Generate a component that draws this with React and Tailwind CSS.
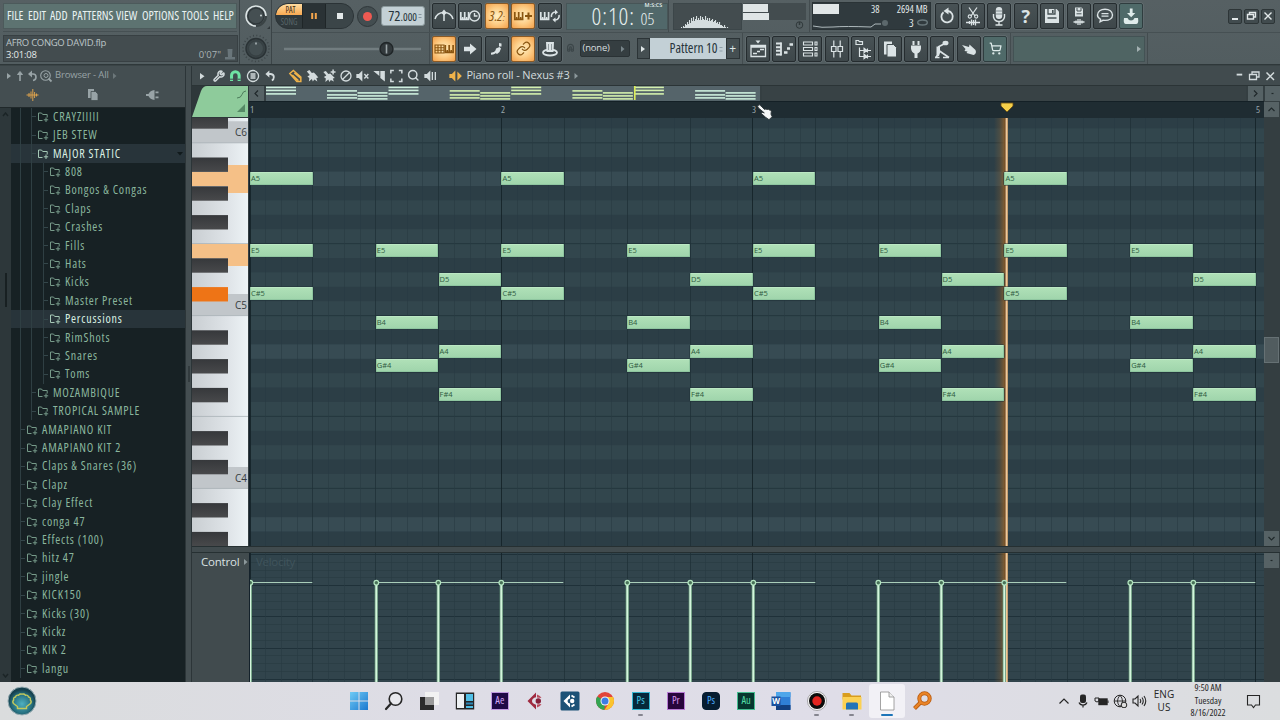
import React from "react";
import { Wrench, Ban, Search, Link, ShoppingCart, Magnet } from "lucide-react";

const ROW = 14.4;
const C5_BOTTOM = 315.6;
const GRID_TOP = 118;
const BEAT = 62.87;
const BLACK = [1, 3, 6, 8, 10];
const SEMI = { C: 0, "C#": 1, D: 2, E: 4, "F#": 6, "G#": 8, A: 9, B: 11 };

const noteY = (name) => {
  const oct = Number(name.slice(-1));
  const k = SEMI[name.slice(0, -1)];
  return C5_BOTTOM - (oct - 5) * 172.8 - (k + 1) * ROW - GRID_TOP;
};

const notes = [];
const starts = [];
for (let bar = 0; bar < 4; bar++) {
  [[0, ["A5", "E5", "C#5"]], [2, ["E5", "B4", "G#4"]], [3, ["D5", "A4", "F#4"]]].forEach(([beat, names]) => {
    const x = 0.8 + (bar * 4 + beat) * BEAT;
    starts.push(x);
    names.forEach((n) => notes.push({ n, x, y: noteY(n) }));
  });
}

const rows = [];
for (let i = 0; i < 32; i++) {
  const y = 142.8 - GRID_TOP - 28.8 + i * ROW;
  const k = (((1 - i) % 12) + 12) % 12;
  rows.push({ y, k });
}

/* ---------- small drawing helpers ---------- */
function Svg({ w = 24, h = 26, className = "", children }) {
  return (
    <svg width={w} height={h} viewBox={`0 0 ${w} ${h}`} className={`block shrink-0 ${className}`} fill="none" stroke="currentColor" strokeWidth="1.4">
      {children}
    </svg>
  );
}
const Keys = ({ x, y = 9 }) => (
  <g>
    <path d={`M${x + 0.8} ${y}V${y + 7.4}H${x + 8.6}V${y}M${x + 4.7} ${y}V${y + 7}`} strokeWidth="1.7" />
    <path d={`M${x + 2.7} ${y + 5}v3M${x + 6.7} ${y + 5}v3`} strokeWidth="1.6" />
  </g>
);

function Btn({ kind = "dark", children }) {
  const look =
    kind === "hot"
      ? "border-[#8a5a26] bg-[radial-gradient(circle,#fff0c4_0%,#fdcd86_50%,#f3a04a_100%)] text-[#8a5510]"
      : kind === "teal"
        ? "border-[#2f3d3f] bg-[#4f6a69] text-[#dfeceb]"
        : "border-[#252c2f] bg-[linear-gradient(#485255,#3e474a)] text-[#dbe3e5]";
  return <div className={`flex h-[26px] w-6 shrink-0 items-center justify-center rounded-[2px] border shadow-[0_0_0_0.5px_#6a7578] ${look}`}>{children}</div>;
}
const VLine = () => <div className="h-full w-px shrink-0 bg-[#434c4f]" />;

/* ---------- header ---------- */
function MenuBlock() {
  return (
    <div className="flex w-[240px] shrink-0 flex-col border-r border-[#3b4447] pl-[3px] pr-[2px]">
      <div className="flex h-8 items-center border-b border-[#465053]">
        <div className="flex h-[26px] w-[235px] items-center border border-[#4c5a5b] bg-[#5d7371] text-[#e9f2f1]">
          <div className="origin-left scale-y-[1.12] whitespace-nowrap pl-[3px] text-[12px] font-medium [font-stretch:75%]">
            <span className="inline-block w-[21px]">FILE</span>
            <span className="inline-block w-[22px]">EDIT</span>
            <span className="inline-block w-[22px]">ADD</span>
            <span className="inline-block w-[44px]">PATTERNS</span>
            <span className="inline-block w-[26px]">VIEW</span>
            <span className="inline-block w-[40px]">OPTIONS</span>
            <span className="inline-block w-[31px]">TOOLS</span>
            <span>HELP</span>
          </div>
        </div>
      </div>
      <div className="mt-[3px] flex h-[27px] w-[235px] flex-col justify-center border border-[#384043] bg-[#434c4f] px-[2px] text-[9.5px] leading-[12px] text-[#bcc5c7]">
        <div className="tracking-[-0.3px]">AFRO CONGO DAVID.flp</div>
        <div className="flex items-center justify-between text-[#e4eaea]">
          <span className="tracking-[-0.2px]">3:01:08</span>
          <span className="flex items-center gap-1 text-[#a9b3b5]">
            0'07"
            <svg width="10" height="11" viewBox="0 0 10 11" fill="#69757a"><path d="M2.500 0h5l-.5 8h3v2.500H0V8h3z" /></svg>
          </span>
        </div>
      </div>
    </div>
  );
}

function Knobs() {
  return (
    <div className="flex w-8 shrink-0 flex-col items-center border-r border-[#3b4447]">
      <Svg w={30} h={32}>
        <circle cx="15" cy="16" r="10" stroke="#3a4345" strokeWidth="2" />
        <circle cx="15" cy="16" r="8" fill="#454f52" stroke="#30383b" />
        <path d="M15 26a10 10 0 1 1 10-10" stroke="#dde5e6" strokeWidth="1.6" />
        <circle cx="20" cy="15.5" r=".9" fill="#dde5e6" stroke="none" />
        <path d="M29 26v3h-3z" fill="#30383b" stroke="none" />
      </Svg>
      <Svg w={30} h={31}>
        <circle cx="15" cy="16.5" r="13" stroke="#3c4548" strokeWidth="1.6" strokeDasharray="1 2.4" />
        <circle cx="15" cy="16.5" r="10" fill="#394346" stroke="#2a3235" />
        <circle cx="15" cy="16.5" r="7.6" fill="#434e51" stroke="#374043" />
        <path d="M15 10.5v2" stroke="#b9c4c6" />
      </Svg>
    </div>
  );
}

function ToolsA() {
  return (
    <div className="flex shrink-0 gap-[2.4px]">
      <Btn><Svg><path d="M3 16Q5 9.500 12 9.500T21 16M12 8v10" strokeWidth="1.5" /><path d="M12 6.500l2.700 3.300L12 12.500 9.300 9.800z" fill="currentColor" stroke="none" /></Svg></Btn>
      <Btn><Svg><Keys x={2} /><circle cx="16.5" cy="13" r="5" fill="#444e51" /><path d="M16.5 10v3h3" /></Svg></Btn>
      <Btn kind="hot"><span className="text-[14px] font-normal italic leading-none tracking-[0px] [font-stretch:80%]">3.2<span className="text-[9px]">:</span></span></Btn>
      <Btn kind="hot"><Svg><Keys x={3} /><path d="M17.5 9.5v7M14 13h7" strokeWidth="2" /></Svg></Btn>
      <Btn><Svg><Keys x={2} /><path d="M13.500 14a4 4 0 0 1 4-5M21 12a4 4 0 0 1-4 5" strokeWidth="1.6" /><path d="M17 6.500l3 2.700-3 2.600zM17.500 14.400v5l-3-2.600z" fill="currentColor" stroke="none" /></Svg></Btn>
    </div>
  );
}
function ToolsB() {
  return (
    <div className="flex shrink-0 gap-[2.4px]">
      <Btn kind="hot"><Svg><path d="M3 9h9v8H3zM3 11.7h9M3 14.3h9M6 9v8M9 9v8" strokeWidth="1.1" /><Keys x={12.5} /></Svg></Btn>
      <Btn><Svg><path d="M6 10.7h6V7.5l6.5 5.5-6.5 5.5v-3.2H6z" fill="currentColor" stroke="none" /></Svg></Btn>
      <Btn><Svg><path d="M6 17.800q4-.3 5.500-2.800" strokeWidth="2" /><path d="M10 16.500l1-4 3.500-1.500 1.500 1.500-1.500 3.500-2.500 2zM14 7l2.500.5v3H14z" fill="currentColor" stroke="none" /></Svg></Btn>
      <Btn kind="hot"><Link size={15} strokeWidth={1.9} /></Btn>
      <Btn><Svg><path d="M8 6h8l-.5 10H8.500z" fill="currentColor" stroke="none" /><ellipse cx="12" cy="16.500" rx="7" ry="3" strokeWidth="1.800" /><path d="M10.500 8v6M13.500 8v6" stroke="#7d898c" strokeWidth=".8" /></Svg></Btn>
    </div>
  );
}

function Transport() {
  return (
    <div className="flex w-[157px] shrink-0 items-center pl-[3px]">
      <div className="flex h-[26px] w-[79px] shrink-0 overflow-hidden rounded-full border border-[#2b3336] bg-[#30393c]">
        <div className="flex w-[26px] flex-col text-center text-[8px] leading-[11px] [font-stretch:85%]">
          <div className="h-[11px] rounded-tl-full bg-[linear-gradient(#ffdca0,#f8a952)] pl-[3px] font-medium text-[#3f2a10]">PAT</div>
          <div className="pt-[1px] text-[#59666a]">SONG</div>
        </div>
        <div className="flex flex-1 items-center justify-center border-x border-[#1f2628] bg-[#2a3235]"><Svg w={8} h={8}><path d="M2.2 1v6M5.800 1v6" stroke="#f5a64d" strokeWidth="2" /></Svg></div>
        <div className="flex w-[27px] items-center justify-center bg-[#3b4548]"><div className="h-[6px] w-[6px] bg-[#e4e9ea]" /></div>
      </div>
      <div className="ml-[3px] flex h-[21px] w-[21px] shrink-0 items-center justify-center rounded-full border border-[#2f373a] bg-[#434d50]">
        <div className="h-[9px] w-[9px] rounded-full bg-[#ef5a52]" />
      </div>
      <div className="ml-[3px] flex h-[20px] w-[44px] shrink-0 items-center justify-end rounded-[3px] border border-[#8b999c] bg-[#c3d0d5] pr-[1px] text-[#26333a]">
        <span className="text-[14.500px] leading-none [font-stretch:75%]">72<span className="text-[11px]">.000</span></span>
        <Svg w={6} h={10}><path d="M1.500 3.500h3M1.500 6.500h3" stroke="#8797a0" strokeWidth="1" /></Svg>
      </div>
    </div>
  );
}

const scope = [1, 0, 2, 1, 4, 3, 6, 4, 8, 5, 10, 7, 11, 7, 9, 12, 8, 10, 8, 12, 8, 11, 9, 8, 12, 8, 10, 7, 10, 7, 8, 9, 6, 7, 8, 5, 6, 4, 6, 3, 3, 2, 1, 3, 1, 0, 1];

function RowOne() {
  return (
    <div className="flex h-[33px] items-center border-b border-[#465053]">
      <Transport />
      <VLine />
      <div className="w-[2px] shrink-0" />
      <ToolsA />
      <div className="ml-[4px] flex h-[27px] w-[102px] shrink-0 items-center border border-[#475557] bg-[#51686a] pl-[25px] text-[#e6efef]">
        <div className="flex h-[26px]">
          <span className="w-[49px] shrink-0 whitespace-nowrap text-[24px] font-light leading-[25px] tracking-[0.9px] [font-stretch:80%]">0:10:</span>
          <span className="flex w-[25px] shrink-0 flex-col">
            <span className="pl-[4px] text-[5.5px] font-semibold leading-[5px]">M:S:CS</span>
            <span className="text-[17px] font-light leading-[22px] [font-stretch:78%]">05</span>
          </span>
        </div>
      </div>
      <VLine />
      <div className="ml-[4px] flex h-[27px] w-[69px] shrink-0 items-end border border-[#3c4649] bg-[#434c4f]">
        <svg width="67" height="25" viewBox="0 0 67 25" fill="#d5dddf">
          {scope.map((h, i) => <rect key={i} x={7 + i} y={24 - h} width="1.1" height={h} />)}
        </svg>
      </div>
      <div className="ml-[1px] flex h-[27px] w-[63px] shrink-0 flex-col gap-px">
        <div className="h-[18px] w-full bg-[#434c4f] pt-px">
          <div className="h-[8px] w-[25px] bg-[#dfe5e6]" />
          <div className="mt-px h-[7px] w-[26px] bg-[#dfe5e6]" />
        </div>
        <div className="flex justify-end pr-[2px]"><Svg w={9} h={9}><circle cx="4.500" cy="4" r="3.300" stroke="#30393b" strokeWidth="1" /><path d="M4.500 4V1" stroke="#30393b" /></Svg></div>
      </div>
      <div className="w-[3px] shrink-0" />
      <VLine />
      <div className="ml-[2px] flex h-[28px] w-[119px] shrink-0 border border-[#2a3336] bg-[#303a3e] text-[10px] text-[#e2e9ea] [font-stretch:78%]">
        <div className="flex w-[69px] flex-col justify-between">
          <div className="flex justify-between pt-[1px] leading-[10px]"><div className="h-[10px] w-[26px] bg-[#e1e7e8]" /><span className="pr-[2px]">38</span></div>
          <Svg w={69} h={8}><path d="M0 5Q8 7 20 6T58 6L62 3h6" stroke="#aeb9bc" strokeWidth="1" /></Svg>
        </div>
        <div className="flex flex-1 flex-col items-end pr-[2px]">
          <span className="whitespace-nowrap leading-[13px]">2694 MB</span>
          <div className="flex w-full items-center justify-between"><div className="h-[6px] w-[6px] rounded bg-[#5c686c]" /><span className="flex items-center gap-[3px] text-[11px] leading-[13px]">3<Svg w={11} h={7}><ellipse cx="5.500" cy="3.500" rx="4.800" ry="2.500" stroke="#68777b" /></Svg></span></div>
        </div>
      </div>
      <div className="w-[4px] shrink-0" />
      <div className="flex shrink-0 gap-[2.4px]">
        <Btn><Svg><path d="M8.500 9.200A5.700 5.700 0 1 0 13 8" strokeWidth="1.800" /><path d="M13.500 4.500v7L8.500 8z" fill="currentColor" stroke="none" /></Svg></Btn>
        <Btn><Svg><path d="M8 4.500l6 8.500M16 4.500L10 13M5 19.500h14M8.500 18v3M10.500 16.500v6M12.500 17v5M14.500 16.500v6" strokeWidth="1.300" /><circle cx="8.800" cy="13.500" r="1.600" strokeWidth="1.100" /><circle cx="15.200" cy="13.500" r="1.600" strokeWidth="1.100" /></Svg></Btn>
        <Btn><Svg><rect x="8.800" y="4" width="6.400" height="12" rx="3" fill="currentColor" stroke="none" /><path d="M6.500 11v3q1 4.500 5.500 4.500t5.500-4.500v-3M12 18.500v3M8.500 22h7" /><path d="M9 8h6M9 11h6" stroke="#67757a" strokeWidth=".8" /></Svg></Btn>
        <Btn><span className="text-[18px] font-bold leading-none">?</span></Btn>
        <Btn><Svg><path d="M5 6h11.500L19 8.500V20H5z" fill="currentColor" stroke="none" /><path d="M8 6v5h7V6M7.500 15h9" stroke="#465154" strokeWidth="1.300" /><path d="M12.800 7v3" stroke="#465154" strokeWidth="1.600" /></Svg></Btn>
        <Btn><Svg><path d="M8 4.500h6.500l1.500 1.500v7.500H8z" fill="currentColor" stroke="none" /><path d="M10 5v3h4V5M9.500 10.800h5" stroke="#465154" strokeWidth="1" /><path d="M6.500 19h11M9 17.500v3M11 16v6M13 16v6M15 17.500v3" strokeWidth="1.300" /></Svg></Btn>
        <Btn><Svg><path d="M7 18.800l.6-2.500Q4.500 14.500 4.500 12c0-3.500 3.300-5.800 7.500-5.800s7.500 2.300 7.500 5.800-3.300 5.400-7.500 5.400l-2-.1z" /><path d="M8.500 10.700h7M8.500 13.200h7" strokeWidth="1.200" /></Svg></Btn>
        <Btn kind="teal"><Svg><path d="M10.800 5.500h2.800V10h2.700l-4.100 4.300L8 10h2.800z" fill="currentColor" stroke="none" /><path d="M5 15h3.500q1 2.500 3.500 2.500t3.500-2.500H19q1 6-2 6H7q-3 0-2-6z" fill="currentColor" stroke="none" /></Svg></Btn>
      </div>
      <div className="ml-auto mr-[5px] flex shrink-0 gap-[2px] text-[#e3e9ea]">
        {["M4 10h6", "M3.500 5.500h6v4.500h-6zM5.500 5.500V3.500h6v4.500h-2", "M3.500 3.500l7 7M10.500 3.500l-7 7"].map((d, i) => (
          <div key={i} className="flex h-[15px] w-[14.500px] items-center justify-center rounded-[2px] border border-[#2d3537] bg-[#414b4e]">
            <svg width="14" height="14" viewBox="0 0 14 14" fill="none" stroke="currentColor" strokeWidth={i === 0 ? 2 : 1.400} className="shrink-0"><path d={d} /></svg>
          </div>
        ))}
      </div>
    </div>
  );
}

function RowTwo() {
  return (
    <div className="flex h-[31px] items-center">
      <div className="flex w-[157px] shrink-0 items-center pl-[12px]">
        <Svg w={140} h={20}>
          <path d="M0 10h137" stroke="#727d80" strokeWidth="2.500" />
          <circle cx="102.500" cy="10" r="6.500" fill="#32393c" stroke="#202628" />
          <path d="M102.500 5.500v9" stroke="#9ba5a8" strokeWidth="1.600" />
        </Svg>
      </div>
      <VLine />
      <div className="w-[2px] shrink-0" />
      <ToolsB />
      <div className="flex w-[18px] shrink-0 items-center justify-center text-[#3c4649]"><Magnet size={9} strokeWidth={3} className="-rotate-45" /></div>
      <div className="flex h-[17px] w-[50px] shrink-0 items-center justify-between rounded-[2px] border border-[#2a3235] bg-[#353e41] pl-[2px] pr-[4px] text-[9.500px] tracking-[-0.2px] text-[#d5dddf]">(none)<Svg w={4} h={6}><path d="M0 0l3.500 3L0 6z" fill="#78858a" stroke="none" /></Svg></div>
      <div className="ml-[7px] flex h-[21px] w-[13px] shrink-0 items-center justify-center border border-[#2c3437] bg-[#454f52]"><Svg w={4} h={6}><path d="M0 0l4 3-4 3z" fill="#dfe6e7" stroke="none" /></Svg></div>
      <div className="flex h-[21px] w-[76px] shrink-0 items-center justify-end bg-[#c3d0d6] pr-[2px] text-[13.500px] text-[#27343b] [font-stretch:77%]">
        Pattern 10
        <Svg w={6} h={12}><path d="M1.500 4.500h3M1.500 8h3" stroke="#8f9fa8" strokeWidth="1" /></Svg>
      </div>
      <div className="flex h-[21px] w-[14px] shrink-0 items-center justify-center border border-[#2c3437] bg-[#454f52] text-[12px] leading-none text-[#dfe6e7]">+</div>
      <div className="w-[2px] shrink-0" />
      <VLine />
      <div className="w-[3px] shrink-0" />
      <div className="flex shrink-0 gap-[2.4px]">
        <Btn><Svg><path d="M9.500 4.500h5L12 7.500z" fill="currentColor" stroke="none" /><path d="M5 9.500h14.500v11H5zM5 11h14.500" strokeWidth="1.300" /><path d="M7 17.500h4M11 15.500h3M14 13.500h4" strokeWidth="1.600" /></Svg></Btn>
        <Btn><Svg><path d="M4 7.500h5.500M4 11.200h5M4 14.800h5M4 18.500h5.500" strokeWidth="2" /><path d="M9 6.500v13" strokeWidth="1.800" /><path d="M12 16.500h3.500M15 12.500h3M17.500 8.500h3.500" strokeWidth="2.600" /></Svg></Btn>
        <Btn><Svg><path d="M5.500 6h9v3h-9zM5.500 11.500h9v3h-9zM5.500 17h9v3h-9zM17 6h2v3h-2zM17 11.500h2v3h-2zM17 17h2v3h-2z" strokeWidth="1.100" /></Svg></Btn>
        <Btn><Svg><path d="M8.800 4.500v6M8.800 15.500v6M15.200 4.500v6M15.200 15.500v6M6.500 10.500h4.500v5H6.500zM13 10.500h4.500v5H13z" strokeWidth="1.200" /></Svg></Btn>
        <Btn><Svg><path d="M5 8.500V4.500h2.500l1 1.200h3v2.800zM8.500 11.500v9H13M8.500 14.500H13" strokeWidth="1.200" /><path d="M13 12.300l3 2.200-3 2.200zM16.500 12.500v4M13 18.300l3 2.200-3 2.200zM16.500 18.500v4M17 14.500h3M17 20.500h3" strokeWidth="1.100" fill="currentColor" /></Svg></Btn>
        <Btn><Svg><path d="M6 5.500h8v13H6z" fill="currentColor" stroke="none" /><path d="M9 8.500h6.500l3 3V21H9z" fill="currentColor" stroke="#424c4f" strokeWidth="1" /></Svg></Btn>
        <Btn><Svg><path d="M7 9.500h10v3q-.5 4-3.500 5V22h-3v-4.500q-3-1-3.500-5zM8.500 5h2v4h-2zM13.500 5h2v4h-2z" fill="currentColor" stroke="none" /></Svg></Btn>
        <Btn><Svg><path d="M15 7.500L8 11M8 19l-2.500 2.500M9.500 15L19 21.500M5 21.500h4.500M13 21.500h6" strokeWidth="1.700" /><ellipse cx="15.500" cy="7" rx="3" ry="2.300" fill="currentColor" stroke="none" /><path d="M6.500 10.500L10 11v6l-1 3H6.500z" fill="currentColor" stroke="none" /></Svg></Btn>
        <Btn><Svg><path d="M5 9l7 2 .5-2.500 6 5.500q1.500 3.500-2 5L9.500 17l1-1.500-3-.5 1-2z" fill="currentColor" stroke="none" /></Svg></Btn>
        <Btn kind="teal"><ShoppingCart size={13} strokeWidth={2.300} /></Btn>
      </div>
      <div className="w-[3px] shrink-0" />
      <VLine />
      <div className="ml-[2px] mr-[2px] flex h-[26px] w-[132px] shrink-0 items-center justify-end border border-[#435254] bg-[#4f6463] pr-[3px]"><Svg w={4} h={6}><path d="M0 0l4 3-4 3z" fill="#a3b1b2" stroke="none" /></Svg></div>
      <VLine />
    </div>
  );
}

/* ---------- browser ---------- */
const tree = [
  [2, "CRAYZIIIII"], [2, "JEB STEW"], [2, "MAJOR STATIC", true], [3, "808"], [3, "Bongos & Congas"], [3, "Claps"], [3, "Crashes"], [3, "Fills"], [3, "Hats"], [3, "Kicks"],
  [3, "Master Preset"], [3, "Percussions", true], [3, "RimShots"], [3, "Snares"], [3, "Toms"], [2, "MOZAMBIQUE"], [2, "TROPICAL SAMPLE"], [1, "AMAPIANO KIT"], [1, "AMAPIANO KIT 2"],
  [1, "Claps & Snares (36)"], [1, "Clapz"], [1, "Clay Effect"], [1, "conga 47"], [1, "Effects (100)"], [1, "hitz 47"], [1, "jingle"], [1, "KICK150"], [1, "Kicks (30)"], [1, "Kickz"], [1, "KIK 2"], [1, "langu"],
];

function TreeRow({ level, name, active }) {
  return (
    <div className={`flex h-[18.42px] shrink-0 items-center ${active ? "bg-[#28343a] text-[#d9efe2]" : "text-[#8ab69e]"}`}>
      <div className="flex h-full shrink-0">
        <div className="w-[10px] border-r border-[#2f3f43]" />
        {level > 1 && <div className="w-[11px] border-r border-[#2f3f43]" />}
        {level > 2 && <div className="w-[12px] border-r border-[#2f3f43]" />}
        <div className="flex w-[5px] items-center"><div className="h-px w-[4px] bg-[#34464a]" /></div>
      </div>
      <Svg w={12} h={12} className={active ? "text-[#a5c8b6]" : "text-[#769a89]"}>
        <path d="M5.500 9.500H1.500V2h3l1.200 1.500h4.500v3" strokeWidth="1" />
        <path d="M9 6.500v4.500M6.800 8.800h4.400" strokeWidth="1" />
      </Svg>
      <span className="ml-[4px] whitespace-nowrap text-[12px] font-medium leading-none tracking-[0.82px] [font-stretch:75%]">{name}</span>
      {name === "MAJOR STATIC" && <svg width="6" height="4" className="ml-auto mr-[2px]"><path d="M0 0h6L3 3.500z" fill="#111a1c" /></svg>}
    </div>
  );
}

function Browser() {
  return (
    <div className="flex w-[185px] shrink-0 flex-col">
      <div className="flex h-[40.500px] shrink-0 flex-col bg-[#444e51] text-[#98a3a6]">
        <div className="flex h-[19px] items-center text-[9.500px]">
          <Svg w={15} h={14}><path d="M7 4l4 3-4 3z" fill="currentColor" stroke="none" /></Svg>
          <Svg w={10} h={12}><path d="M5 3v8" strokeWidth="1.600" /><path d="M2.500 4.500L5 1.500l2.500 3z" fill="currentColor" strokeWidth="1" /></Svg>
          <Svg w={14} h={12}><path d="M5 4h3q3 0 3 3t-3 3.500" strokeWidth="1.600" /><path d="M7 .5v7L3 4z" fill="currentColor" stroke="none" /></Svg>
          <Svg w={14} h={14}><circle cx="6.500" cy="6.500" r="4.800" strokeWidth="1.100" /><circle cx="7" cy="6.500" r="2" strokeWidth="1" /><path d="M9.500 9.500l3 3" strokeWidth="1.800" /></Svg>
          <span className="ml-[2px] w-[55px] whitespace-nowrap tracking-[-0.15px] [font-stretch:96%]">Browser - All</span>
          <Svg w={10} h={8}><path d="M3 1l3.500 3L3 7z" fill="#6c777a" stroke="none" /></Svg>
        </div>
        <div className="flex h-[19px] items-center justify-between pl-[26px] pr-[25px]">
          <Svg w={13} h={12} className="text-[#d9a04d]"><path d="M.5 6h12M3 4v4M5 2.500v7M6.800 0v12M8.600 3v6M10.500 4.500v3" strokeWidth="1" /></Svg>
          <Svg w={12} h={13}><path d="M1 1h6v9H1z" fill="currentColor" stroke="none" /><path d="M4 3.500h4.500L11 6v6.500H4z" fill="currentColor" stroke="#444e51" strokeWidth=".8" /></Svg>
          <Svg w={14} h={12}><path d="M0 5h2.500q1.500-3.500 6-4v10Q4 10.500 2.500 7H0zM9.500 2.500h3v1.800h-3zM9.500 7.500h3v1.800h-3z" fill="currentColor" stroke="none" /></Svg>
        </div>
      </div>
      <div className="flex min-h-0 flex-1 border-t border-[#20282a]">
        <div className="flex w-[11px] shrink-0 flex-col items-center justify-between bg-[#2d373a] py-1">
          <Svg w={7} h={5}><path d="M1 4l2.500-3L6 4" stroke="#1b2426" /></Svg>
          <div className="mb-[210px] h-[34px] w-[2px] bg-[#182022]" />
          <Svg w={7} h={5}><path d="M1 1l2.500 3L6 1" stroke="#1b2426" /></Svg>
        </div>
        <div className="flex min-w-0 flex-1 flex-col overflow-hidden bg-[#172124]">
          {tree.map(([level, name, active]) => <TreeRow key={name} level={level} name={name} active={active} />)}
        </div>
      </div>
    </div>
  );
}

/* ---------- piano roll ---------- */
const I = ({ d, fill, w = 16.7, c, extra, sw = 1.500 }) => (
  <svg width={w} height="14" viewBox="0 0 14 14" fill={fill ? "currentColor" : "none"} stroke={fill ? "none" : "currentColor"} strokeWidth={sw} className={`shrink-0 ${c || ""}`}>
    <path d={d} />
    {extra}
  </svg>
);
const speaker = "M1 5h2.500L7 1.500v11L3.500 9H1z";

function TitleBar() {
  return (
    <div className="flex h-[19px] shrink-0 items-center bg-[#414b4e] text-[#d3dbdd]">
      <I w={19} fill d="M5.500 4l4.500 3.200L5.500 10.400z" />
      <div className="flex w-[16px] shrink-0 justify-center"><Wrench size={12} strokeWidth={3} /></div>
      <I c="text-[#6fe3a4]" sw={3} d="M3.200 12V6.500a3.800 3.800 0 0 1 7.600 0V12" extra={<path d="M1.700 10.200h3M9.300 10.200h3" stroke="#414b4e" strokeWidth="1" />} />
      <I w={18} sw={1.300} d="M7 1.500a5.500 5.500 0 1 0 .01 0M4.500 5h5M4.500 7h5M4.500 9h5" />
      <I sw={1.800} d="M5 5h2.500q3 .5 3 3t-2 3.500" extra={<path d="M6 1.500v7L2 5z" fill="currentColor" stroke="none" />} />
      <div className="w-[9px] shrink-0" />
      <I c="text-[#efb24a]" sw={1.500} d="M1.500 4.500L5 1.500l7.500 6.500v4.500H8.500zM4 6l6 5.500M6 4l6 5" />
      <I fill d="M1.500 2.500L4 1l2.500 3 2-.5L10 5l3 3.500-2 .5 1 3.500-3-2-1.500 2-1-2.500-3 2.500L4 9 2 7.500 4.500 6z" />
      <I fill d="M1 3l2.500-1L6 5l2-.5L9.500 6l3 3-2 .5 1 3-3-1.500L7 13l-1-2.500-3 2.500.5-3.500L1.500 8 4 6.500zM10 .5h1.500v1.700h1.700v1.500h-1.700v1.700H10V3.700H8.300V2.200H10z" />
      <div className="flex w-[17px] shrink-0 justify-center"><Ban size={12} strokeWidth={2.600} className="-scale-x-100" /></div>
      <I fill d={speaker} extra={<path d="M9 5l4 4.500M13 5L9 9.500" stroke="currentColor" strokeWidth="1.400" />} />
      <I fill d="M1 2h6v5zM8 2h4.500v10.500L8 9z" />
      <I sw={1.500} d="M1.500 4.500v-3h3M9.500 1.500h3v3M12.500 9.500v3h-3M4.500 12.500h-3v-3" />
      <div className="flex w-[17px] shrink-0 justify-center"><Search size={12.500} strokeWidth={2.800} /></div>
      <I fill d={speaker} extra={<path d="M9 3v8M12 3v8" stroke="currentColor" strokeWidth="1.300" />} />
      <div className="w-[9px] shrink-0" />
      <I c="text-[#efb24a]" fill d={speaker} extra={<path d="M9 2.500v9L13.500 7z" />} />
      <span className="ml-[2.500px] whitespace-nowrap text-[11px] font-medium tracking-[-0.13px]">Piano roll - Nexus #3</span>
      <Svg w={10} h={8}><path d="M4.500 1L8 4 4.500 7z" fill="#8c989b" stroke="none" /></Svg>
      <div className="ml-auto flex gap-[2px] pr-[3px]">
        <I w={13} d="M5 5.500h6" sw={2} />
        <I w={14} d="M2.500 5.500h7v5h-7zM5 5.500v-2.500h7v5h-2.500" sw={1.300} />
        <I w={14} d="M3.500 3.500l7.500 7.500M11 3.500L3.500 11" />
      </div>
    </div>
  );
}

function MiniMap() {
  const hi = [1.500, 4.500, 8];
  const mid = [5, 9, 12];
  const low = [7, 10, 13];
  const segs = [[0, hi]];
  for (let i = 0; i < 4; i++) {
    segs.push([61 + i * 122.700, mid], [91.500 + i * 122.700, low]);
    if (i < 3) segs.push([122.500 + i * 122.700, hi]);
  }
  return (
    <svg width="494" height="15" viewBox="0 0 494 15" className="shrink-0 bg-[#55646a]">
      {segs.map(([x, ys], i) => ys.map((y) => <rect key={`${i}-${y}`} x={x} y={y - 0.900} width="30" height="1.600" fill={x > 180 && x < 370 ? "#d3efad" : "#cdeedd"} />))}
      <rect x="368" y="0" width="1.600" height="14" fill="#dced5a" />
    </svg>
  );
}

function ScrollBox({ d }) {
  return <div className="flex h-[15px] w-[15px] shrink-0 items-center justify-center bg-[#566265] text-[#20292b]"><Svg w={9} h={9}><path d={d} strokeWidth="1.200" /></Svg></div>;
}

function Keyboard() {
  const off = 118;
  const whiteLines = [];
  [C5_BOTTOM - 172.800, C5_BOTTOM, C5_BOTTOM + 172.800, C5_BOTTOM + 345.600].forEach((b) => {
    whiteLines.push(b, b - 5 * ROW);
  });
  return (
    <svg width="56" height="428" viewBox="0 0 56 428" className="block shrink-0">
      <defs>
        <linearGradient id="wk"><stop offset="0" stopColor="#c9ced2" /><stop offset=".65" stopColor="#dfe4e8" /><stop offset="1" stopColor="#edf3f6" /></linearGradient>
        <linearGradient id="bk" x1="0" y1="0" x2="0" y2="1"><stop offset="0" stopColor="#36383b" /><stop offset="1" stopColor="#48494b" /></linearGradient>
      </defs>
      <rect width="56" height="428" fill="url(#wk)" />
      {[142.800, C5_BOTTOM, 488.400].map((b) => <path key={b} d={`M0 ${b - off}V${b - off - ROW}H36V${b - off - 21.500}H56V${b - off}z`} fill="#c1c6ca" />)}
      {whiteLines.map((y) => <rect key={y} x="0" y={y - off - 0.500} width="56" height="1" fill="#a3abb0" opacity=".7" />)}
      <path d="M0 54H36V47H56V75H36V68H0z" fill="#f5c087" />
      <path d="M0 126H56V148H36V140.500H0z" fill="#f5c087" />
      {rows.filter((r) => BLACK.includes(r.k)).map((r) => <rect key={r.y} x="0" y={r.y + 0.300} width="36" height={ROW} fill={Math.abs(r.y - noteY("C#5")) < 1 ? "#ee7416" : "url(#bk)"} />)}
      {[["C6", 136], ["C5", 309], ["C4", 481.700]].map(([t, y]) => <text key={t} x="55" y={y - off} textAnchor="end" fontSize="10" fontFamily="Open Sans, sans-serif" fill="#363c40" stroke="none">{t}</text>)}
    </svg>
  );
}

function VLines({ h }) {
  return Array.from({ length: 65 }, (_, i) => {
    const strong = i % 16 === 0;
    const beat = i % 4 === 0;
    return <rect key={i} x={Math.round(0.5 + (i * BEAT) / 4)} y="0" width="1" height={h} fill={strong ? "#152329" : beat ? "#1f3037" : "#283a42"} opacity={strong ? 0.9 : beat ? 0.75 : 0.6} />;
  });
}

function Playhead() {
  return (
    <div className="absolute left-[744px] top-0 flex h-full">
      <div className="h-full w-[11px] bg-[linear-gradient(90deg,transparent,rgba(150,100,45,0.25)_50%,rgba(160,102,40,0.75))]" />
      <div className="h-full w-[3px] bg-[linear-gradient(90deg,#7c5a3c,#f0c998,#b08a60)]" />
    </div>
  );
}

function PianoRoll() {
  return (
    <div className="flex min-w-0 flex-1 flex-col bg-[#353f42]">
      <TitleBar />
      <div className="flex h-[33px] shrink-0 border-t border-[#2b3436]">
        <svg width="57" height="32" viewBox="0 0 57 32" className="block shrink-0 bg-[#2e373a]">
          <path d="M0 31L9 5Q11 0 15 0H56V31z" fill="#8ecb9b" />
          <path d="M45 12q4 0 5-3.500T54 5" stroke="#4d7d5c" fill="none" />
          <path d="M53 18v8h-8z" fill="#568a66" />
        </svg>
        <div className="flex min-w-0 flex-1 flex-col">
          <div className="flex h-[15px] shrink-0 gap-[2px]">
            <ScrollBox d="M6 1.500L3 4.500l3 3" />
            <MiniMap />
            <div className="flex-1 bg-[#384245]" />
            <ScrollBox d="M3 1.500l3 3-3 3" />
            <ScrollBox d="M3.500 4.500h2" />
          </div>
          <div className="flex h-[17px] shrink-0 items-center">
            <div className="relative h-full flex-1 border-t border-[#142026] bg-[#1f2c32] text-[9.500px] leading-[15px] text-[#9aa8ad] [font-stretch:85%]">
              {[[1, 1], [2, 252], [3, 503], [5, 1007]].map(([n, x]) => <span key={n} className="absolute top-0" style={{ left: x }}>{n}</span>)}
              <svg width="14" height="11" className="absolute left-[751px] top-0"><path d="M1 1h12v3L7 10 1 4z" fill="#f6d04a" stroke="#6b4c12" strokeWidth=".8" /></svg>
              <svg width="20" height="20" viewBox="0 0 20 20" className="absolute left-[507px] top-[1px] z-10"><path d="M2 2.500Q3.500 1 5 3l3.500 3.500Q10 5.500 11 6.500q1.500-.8 2.300.5 1.500-.3 2 1.200l-.3 3 1.200 2.500-3.200 3-3.500-2.500-4-3.500q-.5-1.500 1.300-1.300l1.500.5L2.500 5Q1.200 3.500 2 2.500z" fill="#f4f6f7" stroke="#2a3337" strokeWidth=".9" /></svg>
            </div>
            <ScrollBox d="M1.500 6l3-3 3 3" />
            <div className="w-px" />
          </div>
        </div>
      </div>

      <div className="flex h-[428px] shrink-0">
        <Keyboard />
        <div className="relative ml-px h-full w-[1015px] shrink-0 overflow-hidden border-l border-[#14212a] bg-[#31444c]">
          <svg width="1014" height="428" viewBox="1 0 1014 428" className="block">
            {rows.map((r) => <rect key={r.y} x="0" y={r.y} width="1015" height={ROW + 0.200} fill={BLACK.includes(r.k) ? "#2c3e46" : r.k === 9 ? "#374b53" : "#32464d"} />)}
            {rows.filter((r) => r.k === 0 || r.k === 5).map((r) => <rect key={r.y} x="0" y={r.y + ROW - 0.500} width="1015" height="1" fill="#22343b" opacity=".8" />)}
            <VLines h={428} />
          </svg>
          <Playhead />
          {notes.map(({ n, x, y }) => (
            <div key={`${n}-${x}`} className="absolute h-[13px] w-[62.500px] rounded-[1px] border border-[#8fc6a0] border-t-[#bce8c4] bg-[linear-gradient(#afe0b7,#a0d5ac)] text-[7.500px] leading-[11px] text-[#2f5a3f] shadow-[0_0_0_0.5px_#203239] [font-stretch:90%]" style={{ left: x - 0.8, top: y + 0.600 }}>{n}</div>
          ))}
        </div>
        <div className="flex w-[16px] flex-col justify-between bg-[#343e41] pr-px">
          <div />
          <div className="mt-[50px] h-[26px] w-[15px] border border-[#667174] bg-[#515c5f]" />
          <ScrollBox d="M1.500 3l3 3 3-3" />
        </div>
      </div>

      <div className="h-[7px] shrink-0 border-y border-[#263032] bg-[#414b4e]" />

      <div className="flex min-h-0 flex-1">
        <div className="flex w-[57px] shrink-0 items-start bg-[#414b4e] pl-[9px] text-[11.500px] font-medium text-[#dbe2e3]"><span className="w-[39px] tracking-[-0.2px] [font-stretch:90%]">Control</span><Svg w={8} h={16}><path d="M4 6l3.500 3L4 12z" fill="#8c989b" stroke="none" /></Svg></div>
        <div className="relative h-full w-[1015px] shrink-0 overflow-hidden border-l border-[#14212a] bg-[#31444c]">
          <svg width="1014" height="129" viewBox="1 0 1014 129" className="block">
            {Array.from({ length: 21 }, (_, i) => <rect key={i} x="0" y={Math.round(1 + i * 7.800)} width="1015" height="1" fill={i % 4 === 0 ? "#1e3037" : "#293c43"} opacity={i % 4 === 0 ? 0.9 : 0.7} />)}
            <VLines h={129} />
          </svg>
          <span className="absolute left-[6px] top-0 text-[11.500px] tracking-[-0.3px] text-[#40545c] [font-stretch:95%]">Velocity</span>
          <Playhead />
          <svg width="1014" height="129" viewBox="1 0 1014 129" className="absolute left-0 top-0">
            {starts.map((x) => {
              const p = Math.round(x) + 0.300;
              return (
                <g key={x}>
                  <path d={`M${p} 29.500H${p + 62}`} stroke="#a9cdb9" strokeWidth="1.200" />
                  <path d={`M${p} 31V129`} stroke="#5d8c72" strokeWidth="3.400" />
                  <path d={`M${p} 31V129`} stroke="#d3f5dc" strokeWidth="1.900" />
                  <circle cx={p} cy="29.700" r="2.300" fill="#487158" stroke="#b2e3bf" strokeWidth="1.200" />
                </g>
              );
            })}
          </svg>
        </div>
        <div className="flex-1 bg-[#343e41]"><ScrollBox d="M3.500 4.500h2" /></div>
      </div>
    </div>
  );
}

/* ---------- taskbar ---------- */
function Adobe({ label, bg, fg, edge, round }) {
  return <div className={`flex h-[18px] w-[18px] items-center justify-center border text-[10.500px] font-medium leading-none ${bg} ${fg} ${edge} ${round ? "rounded-[4px]" : ""}`}><span className="[font-stretch:85%]">{label}</span></div>;
}
const TIcon = ({ children }) => <svg width="20" height="20" viewBox="0 0 20 20">{children}</svg>;

function Taskbar() {
  const apps = [
    [<TIcon><defs><linearGradient id="win" x2="1" y2="1"><stop stopColor="#6fcbf5" /><stop offset="1" stopColor="#1b78cf" /></linearGradient></defs><path d="M1 1h8.500v8.500H1zM10.500 1H19v8.500h-8.500zM1 10.500h8.500V19H1zM10.500 10.500H19V19h-8.500z" fill="url(#win)" /></TIcon>],
    [<TIcon><circle cx="11.500" cy="8" r="6.300" fill="#e9e9ee" stroke="#272727" strokeWidth="1.600" /><path d="M7 12.500L2 18" stroke="#272727" strokeWidth="2.200" strokeLinecap="round" /></TIcon>],
    [<TIcon><path d="M1 6h14v13H1z" fill="#2b2b2b" /><path d="M6 1h14v13H6z" fill="#f2f2f2" /><path d="M6 6h9v8H6z" fill="#9a9a9a" /></TIcon>],
    [<TIcon><rect x=".8" y="1.500" width="18.400" height="17" fill="#262626" /><rect x="2" y="3" width="7" height="14" fill="#eef1f3" /><rect x="11" y="3" width="7" height="7" fill="#51bfe6" /><rect x="11" y="11.500" width="7" height="2" fill="#2e87b5" /><rect x="11" y="15" width="7" height="2" fill="#51bfe6" /></TIcon>],
    [<Adobe label="Ae" bg="bg-[#1f0a46]" fg="text-[#cfa5f4]" edge="border-[#c09ae0]" />],
    [<TIcon><path d="M2.500 10L11 1.500v4.800q-4 1-4 3.700t4 3.700v4.800z" fill="#9f2a40" /><path d="M12 3.500q3.500 1 4.500 3.500L12 6.500zM12 13.500l4.500-.5q-1 2.500-4.500 3.500z" fill="#b94a5c" /><circle cx="13.300" cy="10" r="2.700" fill="#86203a" /></TIcon>],
    [<TIcon><rect x=".5" y=".5" width="19" height="19" rx="1.500" fill="#1d5277" /><path d="M3.500 10L10 3.500v4Q7.500 8 7.500 10t2.500 2.500v4z" fill="#fff" /><circle cx="12.200" cy="10" r="2.200" fill="#fff" /><path d="M11.500 4.500l3 2M11.500 15.500l3-2" stroke="#fff" strokeWidth="1.800" /></TIcon>],
    [<TIcon><circle cx="10" cy="10" r="9" fill="#e2453a" /><path d="M10 10L2.200 5.500A9 9 0 0 0 9.500 19z" fill="#33a452" /><path d="M10 10h9A9 9 0 0 1 9.500 19L14 12z" fill="#fbc42d" /><path d="M10 6h8.200a9 9 0 0 1 .8 4h-9z" fill="#fbc42d" /><circle cx="10" cy="10" r="4.500" fill="#f5f5f5" /><circle cx="10" cy="10" r="3.500" fill="#3d7de4" /></TIcon>],
    [<Adobe label="Ps" bg="bg-[#06283a]" fg="text-[#48cbe8]" edge="border-[#36b6d2]" />, "dot"],
    [<Adobe label="Pr" bg="bg-[#28053c]" fg="text-[#d595ee]" edge="border-[#b77bd4]" />],
    [<Adobe label="Ps" bg="bg-[#061d31]" fg="text-[#4aaeff]" edge="border-[#061d31]" round />],
    [<Adobe label="Au" bg="bg-[#06372f]" fg="text-[#53dca6]" edge="border-[#45bd90]" />],
    [<TIcon><rect x="5" y="1" width="14.500" height="18" rx="1" fill="#2f7fd6" /><rect x="5" y="1" width="14.500" height="5" fill="#4ea6ea" /><rect x="5" y="14" width="14.500" height="5" fill="#123f80" /><rect x=".5" y="5.500" width="9" height="9.500" fill="#194f9e" /><text x="5" y="13.300" fontSize="8" fontWeight="700" fill="#fff" textAnchor="middle" fontFamily="Open Sans, sans-serif">W</text></TIcon>],
    [<TIcon><circle cx="10" cy="10" r="9.500" fill="#fbfbfb" stroke="#777" strokeWidth=".6" /><circle cx="10" cy="10" r="8" fill="#0c0c0c" /><circle cx="10" cy="10" r="4.700" fill="#e3241f" /></TIcon>, "dot"],
    [<TIcon><path d="M.5 2h7l2 2.500H19v4H.5z" fill="#d99d1c" /><path d="M.5 6h19v12.500H.5z" fill="#fbd154" /><path d="M4 18.500V13q0-1.500 1.500-1.500h9q1.500 0 1.500 1.500v5.500z" fill="#2274b8" /></TIcon>, "dot"],
    [<TIcon><path d="M3.500 1h8.500l5 5v13H3.500z" fill="#fff" stroke="#8e8e8e" strokeWidth=".8" /><path d="M12 1v5h5" fill="#eee" stroke="#8e8e8e" strokeWidth=".8" /></TIcon>, "on"],
    [<TIcon><circle cx="12.500" cy="7.500" r="5.200" fill="none" stroke="#b85a0e" strokeWidth="4" /><path d="M8.500 11.500L2.500 17.500" stroke="#b85a0e" strokeWidth="4" /><circle cx="12.500" cy="7.500" r="5.200" fill="none" stroke="#e98427" strokeWidth="2.400" /><path d="M8.500 11.500L2.800 17.200" stroke="#e98427" strokeWidth="2.400" /></TIcon>],
  ];
  return (
    <div className="flex h-[38px] w-full shrink-0 items-center bg-[linear-gradient(90deg,#dadcdd,#dedde6_35%,#dfdde8_65%,#dbdddf)]">
      <div className="flex w-[341.500px] shrink-0 pl-[7px]">
        <svg width="30" height="30" viewBox="0 0 30 30">
          <defs><radialGradient id="orb" cy=".6"><stop stopColor="#4fb0c0" /><stop offset=".7" stopColor="#256e7e" /><stop offset="1" stopColor="#16414f" /></radialGradient></defs>
          <circle cx="15" cy="15" r="14" fill="url(#orb)" stroke="#96adb3" />
          <path d="M10.500 22.500v-2l-4-3q-1.500-2 .2-3.500-.7-2.500 1.800-3 .5-2.200 3-1.800Q13 7.500 15 8.200q2-.7 3.500 1 2.500-.4 3 1.800 2.500.5 1.800 3 1.700 1.500.2 3.500l-4 3v2z" fill="none" stroke="#c3c95c" strokeWidth="1.400" />
        </svg>
      </div>
      {apps.map(([icon, state], i) => (
        <div key={i} className={`flex h-[34px] w-[35.200px] shrink-0 flex-col items-center justify-end ${state === "on" ? "rounded-[3px] bg-[#f2f1f6]" : ""}`}>
          <div className="flex h-[22px] items-center">{icon}</div>
          <div className={`mt-[2px] h-[2.500px] rounded-full ${state === "on" ? "w-3 bg-[#1c74b8]" : state === "dot" ? "w-[5px] bg-[#85858f]" : "w-px bg-transparent"} mb-[2px]`} />
        </div>
      ))}
      <div className="ml-auto flex w-[224px] shrink-0 items-center text-[#262626]">
        <div className="flex w-[95px] shrink-0 items-center gap-[4px]">
          <Svg w={16} h={14}><path d="M3.500 9.500L8 5l4.500 4.500" strokeWidth="1.200" /></Svg>
          <Svg w={14} h={14}><rect x="4" y=".5" width="6" height="8.500" rx="2" fill="currentColor" stroke="none" /><path d="M3 8.500Q4 11 7 11t4-2.500M7 11v2.500" strokeWidth="1.200" /></Svg>
          <Svg w={15} h={14}><rect x="5" y="5" width="8" height="5.500" fill="currentColor" /><path d="M14 6.500v2.500M1 4h4v3q-2 2-4 0z" strokeWidth="1" /></Svg>
          <Svg w={15} h={14}><circle cx="7" cy="7" r="5.800" strokeWidth="1" /><path d="M1.200 7h11.600M7 1.200q-5 5.800 0 11.600M7 1.200q5 5.800 0 11.600" strokeWidth=".9" /><circle cx="11" cy="11" r="2.800" fill="#ddd" strokeWidth="1" /></Svg>
          <Svg w={16} h={14}><path d="M1 5h2l3-3v10L3 9H1zM8 5q1.500 2 0 4M10 3.500q2.500 3.500 0 7M12 2q3.500 5 0 10" strokeWidth="1.100" /></Svg>
        </div>
        <div className="ml-[1px] w-[24px] shrink-0 text-center text-[10px] leading-[13.500px] [font-stretch:90%]">ENG<br />US</div>
        <div className="ml-[7px] w-[50px] shrink-0 whitespace-nowrap text-center text-[9.500px] leading-[12.800px] [font-stretch:84%]">9:50 AM<br />Tuesday<br />8/16/2022</div>
        <Svg w={38} h={16}><path d="M14.500 2.500h12v9.500h-4l-2 2.500-2-2.500h-4z" strokeWidth="1.100" /></Svg>
      </div>
    </div>
  );
}

export default function App() {
  return (
    <div className="flex h-[720px] w-[1280px] flex-col overflow-hidden bg-[#2b3437] font-['Open_Sans','Noto_Sans',sans-serif]">
      <div className="flex h-[65px] shrink-0 border-b border-[#2f383a] bg-[linear-gradient(#566063,#525d60)]">
        <MenuBlock />
        <Knobs />
        <div className="flex min-w-0 flex-1 flex-col">
          <RowOne />
          <RowTwo />
        </div>
      </div>
      <div className="flex min-h-0 flex-1 border-t border-[#3a4446]">
        <Browser />
        <div className="flex w-[7px] shrink-0 items-center justify-center border-x border-[#2c3538] bg-[#444e51]"><div className="h-4 w-[2px] bg-[#323b3e]" /></div>
        <PianoRoll />
      </div>
      <Taskbar />
    </div>
  );
}
